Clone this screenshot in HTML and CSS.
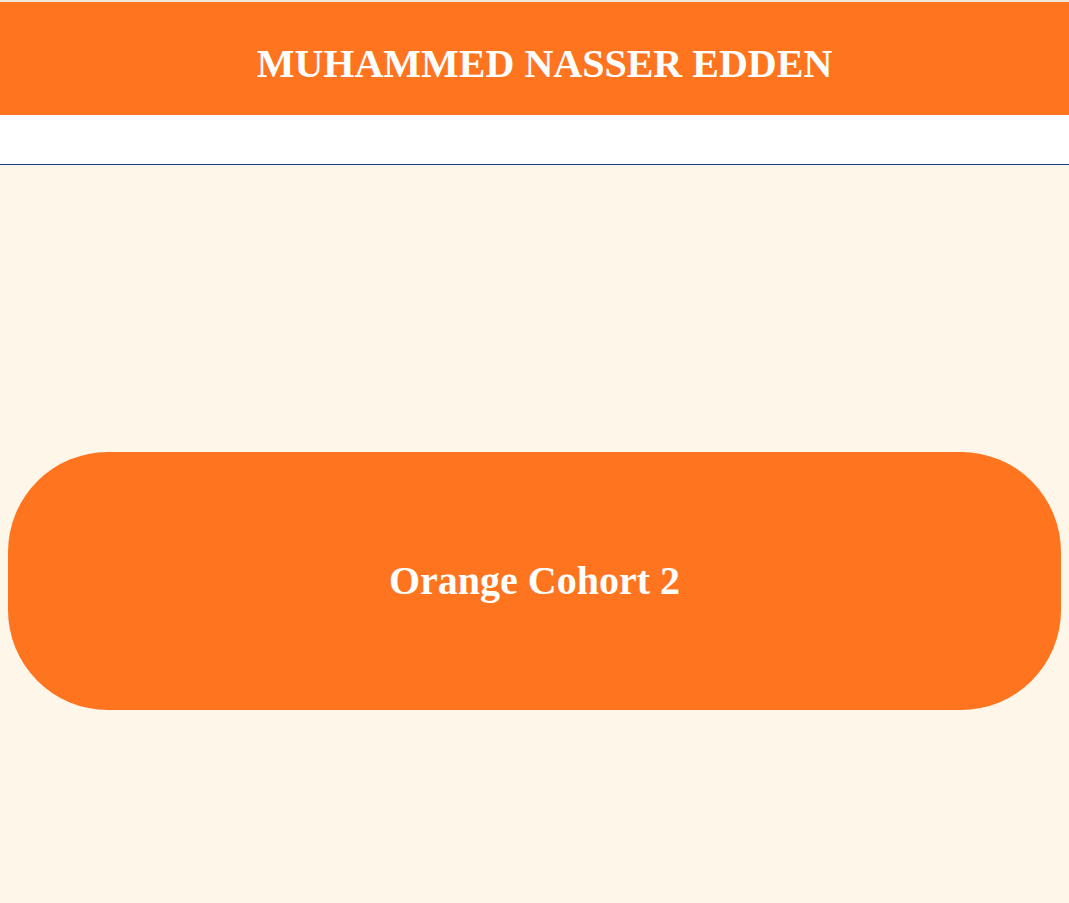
FILE: index.html
```html
<!DOCTYPE html>
<html>
<head>
<meta charset="utf-8">
<link rel="stylesheet" href="styles.css">
</head>
<body>
<div class="topline"></div>
<header class="header">
  <h1 class="title">MUHAMMED NASSER EDDEN</h1>
</header>
<nav class="nav"></nav>
<main class="main">
  <section class="pill">
    <h2 class="pill-text">Orange Cohort 2</h2>
  </section>
</main>
</body>
</html>
```
FILE: styles.css
```css
html, body {
  margin: 0;
  padding: 0;
}
body {
  font-family: "Liberation Serif", "Times New Roman", serif;
  background: #fff6ea;
  min-height: 903px;
}
.topline {
  height: 2px;
  background: #efe6dc;
}
.header {
  height: 113px;
  background: #ff741e;
  display: flex;
  align-items: center;
  justify-content: center;
  padding-left: 20px;
}
.title {
  margin: 0;
  color: #ffffff;
  font-size: 40px;
  font-weight: bold;
  line-height: 1;
  padding-top: 10px;
}
.nav {
  height: 49px;
  background: #ffffff;
  border-bottom: 1px solid #1e3b7e;
}
.main {
  padding: 287px 8px 0;
}
.pill {
  height: 258px;
  background: #ff741e;
  border-radius: 100px;
  display: flex;
  align-items: center;
  justify-content: center;
}
.pill-text {
  margin: 0;
  color: #ffffff;
  font-size: 40px;
  font-weight: bold;
  line-height: 1;
}
```
